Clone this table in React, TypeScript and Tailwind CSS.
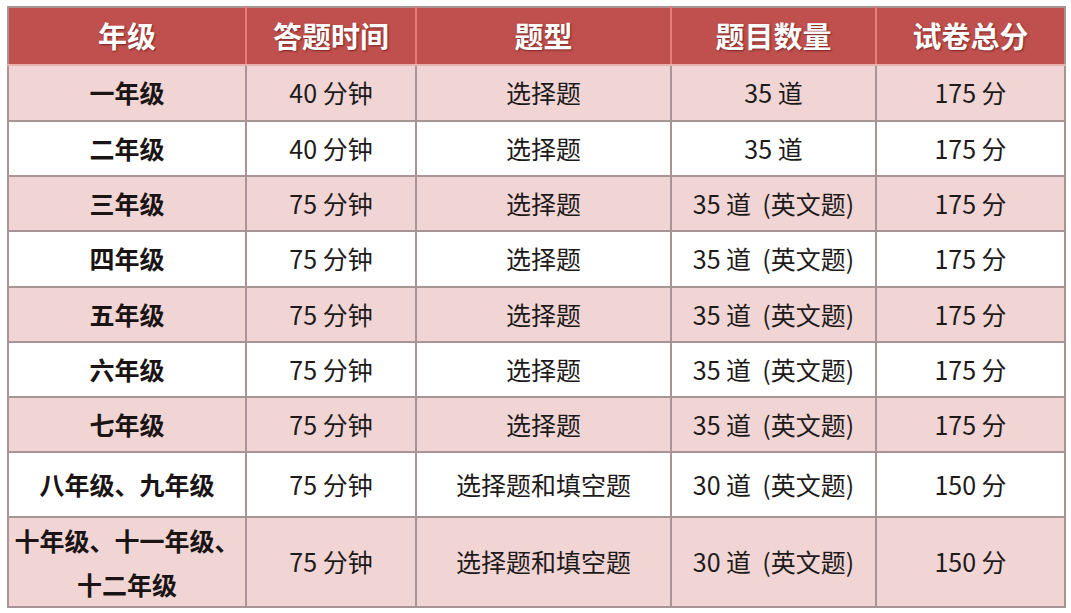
import React from "react";

const rows: { g: React.ReactNode; t: string; type: string; n: string; s: string; h: string; pink: boolean }[] = [
  { g: "一年级", t: "40 分钟", type: "选择题", n: "35 道", s: "175 分", h: "h-[56px]", pink: true },
  { g: "二年级", t: "40 分钟", type: "选择题", n: "35 道", s: "175 分", h: "h-[55px]", pink: false },
  { g: "三年级", t: "75 分钟", type: "选择题", n: "35 道  (英文题)", s: "175 分", h: "h-[55px]", pink: true },
  { g: "四年级", t: "75 分钟", type: "选择题", n: "35 道  (英文题)", s: "175 分", h: "h-[56px]", pink: false },
  { g: "五年级", t: "75 分钟", type: "选择题", n: "35 道  (英文题)", s: "175 分", h: "h-[55px]", pink: true },
  { g: "六年级", t: "75 分钟", type: "选择题", n: "35 道  (英文题)", s: "175 分", h: "h-[55px]", pink: false },
  { g: "七年级", t: "75 分钟", type: "选择题", n: "35 道  (英文题)", s: "175 分", h: "h-[55px]", pink: true },
  { g: "八年级、九年级", t: "75 分钟", type: "选择题和填空题", n: "30 道  (英文题)", s: "150 分", h: "h-[65px]", pink: false },
  {
    g: (
      <span className="block leading-[44px]">
        十年级、十一年级、
        <br />
        十二年级
      </span>
    ),
    t: "75 分钟",
    type: "选择题和填空题",
    n: "30 道  (英文题)",
    s: "150 分",
    h: "h-[87px]",
    pink: true,
  },
];

const headers = ["年级", "答题时间", "题型", "题目数量", "试卷总分"];

export default function App() {
  return (
    <div className="w-[1071px] h-[613px] bg-white pt-[6px] pl-[7px] font-['Noto_Sans_CJK_SC','Noto_Sans',sans-serif]">
      <table className="table-fixed border-collapse border-2 border-[#a89494] w-[1057px]">
        <colgroup>
          <col className="w-[238px]" />
          <col className="w-[170px]" />
          <col className="w-[255px]" />
          <col className="w-[205px]" />
          <col className="w-[189px]" />
        </colgroup>
        <thead>
          <tr className="h-[58px] bg-[#c0504d]">
            {headers.map((h, i) => (
              <th
                key={h}
                className={`p-0 text-white text-[29px] font-bold text-center align-middle [text-shadow:1px_1px_2px_rgba(60,0,0,0.55)] border-b-2 border-b-[#e8b0ae] ${
                  i < 4 ? "border-r-2 border-r-[#e77c78]" : ""
                }`}
              >
                {h}
              </th>
            ))}
          </tr>
        </thead>
        <tbody>
          {rows.map((r, i) => (
            <tr key={i} className={`${r.h} ${r.pink ? "bg-[#f0d5d4]" : "bg-white"}`}>
              <td className="p-0 border-2 border-[#a89494] text-center align-middle text-[25px] font-bold text-[#1a1414] leading-tight">
                {r.g}
              </td>
              <td className="p-0 border-2 border-[#a89494] text-center align-middle text-[25px] text-[#1e1a1a]">{r.t}</td>
              <td className="p-0 border-2 border-[#a89494] text-center align-middle text-[25px] text-[#1e1a1a]">{r.type}</td>
              <td className="p-0 border-2 border-[#a89494] text-center align-middle text-[25px] text-[#1e1a1a] whitespace-pre">{r.n}</td>
              <td className="p-0 border-2 border-[#a89494] text-center align-middle text-[25px] text-[#1e1a1a]">{r.s}</td>
            </tr>
          ))}
        </tbody>
      </table>
    </div>
  );
}
